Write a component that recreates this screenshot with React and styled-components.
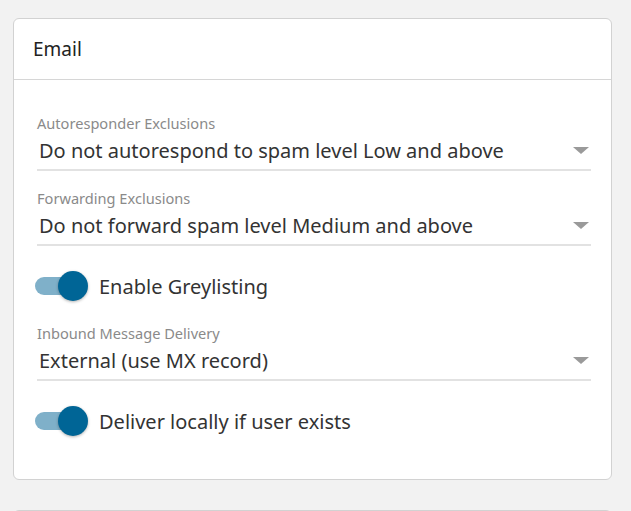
import React from 'react';
import styled, { createGlobalStyle } from 'styled-components';

const GlobalStyle = createGlobalStyle`
    html, body {
        margin: 0;
        padding: 0;
        background: #f2f2f2;
        font-family: 'Noto Sans', 'Open Sans', sans-serif;
        color: #333;
        overflow: hidden;
    }
`;

const Page = styled.div`
    padding: 18px 19px 0 13px;
    display: flex;
    flex-direction: column;
    gap: 30px;
`;

const Card = styled.section`
    background: #fff;
    border: 1px solid #d2d2d2;
    border-radius: 6px;
    min-height: ${(p) => p.minHeight || 0}px;
`;

const CardHeader = styled.header`
    height: 60px;
    padding: 0 19px;
    display: flex;
    align-items: center;
    border-bottom: 1px solid #d6d6d6;
    font-size: 19px;
    color: #222;
`;

const CardBody = styled.div`
    padding: 34px 20px 20px 23px;
    display: flex;
    flex-direction: column;
`;

const Field = styled.div`
    display: flex;
    flex-direction: column;
    margin-bottom: 18px;
`;

const Label = styled.label`
    font-size: 14.6px;
    color: #8a8a8a;
    line-height: 18px;
`;

const SelectBox = styled.div`
    display: flex;
    align-items: center;
    justify-content: space-between;
    height: 36px;
    padding: 0 0 1px 2px;
    border-bottom: 2px solid #e2e2e2;
    font-size: 20px;
    color: #333;
`;

const Arrow = styled.span`
    width: 0;
    height: 0;
    border-left: 8px solid transparent;
    border-right: 8px solid transparent;
    border-top: 7px solid #9a9a9a;
    margin-right: 2px;
`;

const ToggleRow = styled.div`
    display: flex;
    align-items: center;
    gap: 10px;
    height: 30px;
    margin: 7px 0 23px;
    font-size: 20px;
    color: #333;
`;

const Switch = styled.span`
    position: relative;
    width: 52px;
    height: 30px;
    flex-shrink: 0;
    &::before {
        content: '';
        position: absolute;
        left: -2px;
        top: 6px;
        width: 46px;
        height: 18px;
        border-radius: 9px;
        background: #7fb0c9;
    }
    &::after {
        content: '';
        position: absolute;
        right: 1px;
        top: 0;
        width: 30px;
        height: 30px;
        border-radius: 50%;
        background: #006596;
        box-shadow: 0 1px 3px rgba(0, 0, 0, 0.3);
    }
`;

const SelectField = ({ label, value }) => (
    <Field>
        <Label>{label}</Label>
        <SelectBox>
            <span>{value}</span>
            <Arrow />
        </SelectBox>
    </Field>
);

const Toggle = ({ children }) => (
    <ToggleRow>
        <Switch />
        <span>{children}</span>
    </ToggleRow>
);

export default function App() {
    return (
        <>
            <GlobalStyle />
            <Page>
                <Card>
                    <CardHeader>Email</CardHeader>
                    <CardBody>
                        <SelectField
                            label='Autoresponder Exclusions'
                            value='Do not autorespond to spam level Low and above'
                        />
                        <SelectField
                            label='Forwarding Exclusions'
                            value='Do not forward spam level Medium and above'
                        />
                        <Toggle>Enable Greylisting</Toggle>
                        <SelectField
                            label='Inbound Message Delivery'
                            value='External (use MX record)'
                        />
                        <Toggle>Deliver locally if user exists</Toggle>
                    </CardBody>
                </Card>
                <Card minHeight={60} />
            </Page>
        </>
    );
}
